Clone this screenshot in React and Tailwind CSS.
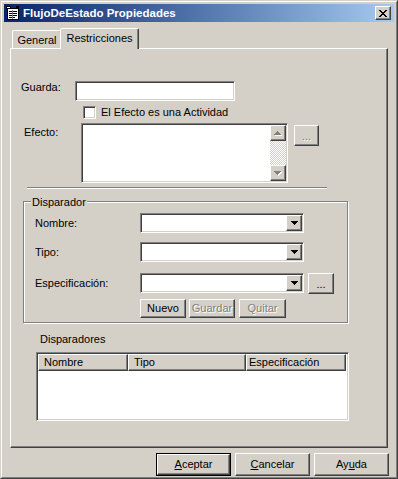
import React from "react";

const raised =
  "border border-t-white border-l-white border-r-[#404040] border-b-[#404040] shadow-[inset_-1px_-1px_0_#808080]";
const sunken =
  "border border-t-[#808080] border-l-[#808080] border-r-white border-b-white shadow-[inset_1px_1px_0_#404040,inset_-1px_-1px_0_#d4d0c8]";
const disabledText = "text-[#808080] [text-shadow:1px_1px_0_#ffffff]";

const ARROW_DOWN = ["#######", ".#####.", "..###..", "...#..."];
const ARROW_UP = ["...#...", "..###..", ".#####.", "#######"];
const CLOSE_X = ["##....##", ".##..##.", "..####..", "...##...", "..####..", ".##..##.", "##....##"];

function Glyph({ rows, color = "#000000", shadow = false }) {
  const h = rows.length;
  const w = rows[0].length;
  const pts = [];
  rows.forEach((r, y) => [...r].forEach((c, x) => c === "#" && pts.push([x, y])));
  return (
    <svg
      width={shadow ? w + 1 : w}
      height={shadow ? h + 1 : h}
      shapeRendering="crispEdges"
      className="block">
      {shadow &&
        pts.map(([x, y]) => <rect key={`s${x}-${y}`} x={x + 1} y={y + 1} width="1" height="1" fill="#ffffff" />)}
      {pts.map(([x, y]) => (
        <rect key={`${x}-${y}`} x={x} y={y} width="1" height="1" fill={color} />
      ))}
    </svg>
  );
}

function TitleIcon() {
  return (
    <svg width="16" height="16" viewBox="0 0 16 16" shapeRendering="crispEdges" className="block shrink-0">
      <rect x="2.5" y="3.5" width="11" height="11" fill="#ffffff" stroke="#000000" />
      <rect x="4" y="6" width="8" height="1" fill="#000000" />
      <rect x="4" y="8" width="8" height="1" fill="#000000" />
      <rect x="4" y="10" width="8" height="1" fill="#000000" />
      <rect x="4" y="12" width="6" height="1" fill="#000000" />
      <rect x="7" y="5" width="1" height="9" fill="#808080" />
      <rect x="1" y="1" width="5" height="3" fill="#000000" />
      <rect x="2" y="2" width="3" height="1" fill="#ffffff" />
      <rect x="11" y="1" width="3" height="3" fill="#000000" />
    </svg>
  );
}

function Button({ children, className = "", disabled = false }) {
  return (
    <div
      className={`${raised} bg-[#d4d0c8] flex items-center justify-center ${
        disabled ? disabledText : "text-black"
      } ${className}`}>
      {children}
    </div>
  );
}

function Combo({ className = "" }) {
  return (
    <div className={`${sunken} bg-white h-[20px] w-[164px] p-px flex justify-end ${className}`}>
      <div className={`${raised} bg-[#d4d0c8] w-[16px] h-[16px] flex items-center justify-center`}>
        <Glyph rows={ARROW_DOWN} />
      </div>
    </div>
  );
}

function HeaderCell({ children, className = "" }) {
  return (
    <div className={`${raised} bg-[#d4d0c8] h-full flex items-center ${className}`}>{children}</div>
  );
}

export default function App() {
  return (
    <div className="w-[398px] h-[479px] bg-[#d4d0c8] border border-t-[#d4d0c8] border-l-[#d4d0c8] border-r-[#404040] border-b-[#404040] font-['Liberation_Sans',Arial,sans-serif] text-[11px] leading-[13px] text-black select-none overflow-hidden">
      <div className="h-full border border-t-white border-l-white border-r-[#808080] border-b-[#808080] pt-[2px] px-[2px] pb-px flex flex-col">
        {/* title bar */}
        <div className="h-[18px] shrink-0 flex items-center bg-gradient-to-r from-[#0a246a] to-[#a6caf0] pl-px pr-[3px]">
          <TitleIcon />
          <span className="ml-[2px] text-white font-bold text-[11.5px] leading-[14px]">FlujoDeEstado Propiedades</span>
          <div className={`${raised} ml-auto w-[16px] h-[14px] bg-[#d4d0c8] flex items-center justify-center`}>
            <Glyph rows={CLOSE_X} />
          </div>
        </div>

        {/* tabs */}
        <div className="mt-[6px] ml-[8px] h-[21px] shrink-0 flex items-end relative z-10">
          <div className="w-[50px] h-[18px] mb-px border-t border-l border-t-white border-l-white border-r border-r-[#404040] shadow-[inset_-1px_0_0_#808080] rounded-t-[2px] flex justify-center pt-[3px]">
            General
          </div>
          <div className="-ml-[2px] w-[79px] h-[21px] bg-[#d4d0c8] border-t border-l border-t-white border-l-white border-r border-r-[#404040] shadow-[inset_-1px_0_0_#808080] rounded-t-[2px] flex justify-center pt-[3px]">
            Restricciones
          </div>
        </div>

        {/* panel */}
        <div className="-mt-px mx-[6px] h-[400px] shrink-0 border-t border-l border-t-white border-l-white border-r border-b border-r-[#404040] border-b-[#404040] shadow-[inset_-1px_-1px_0_#808080] flex flex-col">
          <div className="mt-[32px] ml-[10px] flex items-start">
            <span className="w-[54px]">Guarda:</span>
            <div className={`${sunken} bg-white w-[160px] h-[20px]`} />
          </div>

          <div className="mt-[5px] ml-[72px] flex items-center gap-[5px]">
            <div className={`${sunken} bg-white w-[13px] h-[13px]`} />
            <span className="-mt-px">El Efecto es una Actividad</span>
          </div>

          <div className="mt-[4px] ml-[13px] flex items-start">
            <span className="w-[57px] pt-[3px]">Efecto:</span>
            <div className={`${sunken} bg-white w-[207px] h-[60px] p-px flex justify-end`}>
              <div className="w-[16px] h-full flex flex-col">
                <div className={`${raised} bg-[#d4d0c8] w-[16px] h-[16px] flex items-center justify-center`}>
                  <Glyph rows={ARROW_UP} color="#808080" shadow />
                </div>
                <div className="flex-1 bg-[repeating-conic-gradient(#ffffff_0%_25%,#d4d0c8_0%_50%)] bg-[length:2px_2px]" />
                <div className={`${raised} bg-[#d4d0c8] w-[16px] h-[16px] flex items-center justify-center`}>
                  <Glyph rows={ARROW_DOWN} color="#808080" shadow />
                </div>
              </div>
            </div>
            <Button disabled className="ml-[6px] mt-[2px] w-[25px] h-[21px] pt-[2px]">
              ...
            </Button>
          </div>

          <div className="mt-[4px] ml-[16px] w-[300px] h-[2px] border-t border-b border-t-[#808080] border-b-white" />

          {/* Disparador group */}
          <div className="mt-[12px] ml-[12px] w-[325px] h-[122px] relative border border-[#808080] shadow-[inset_1px_1px_0_#ffffff,1px_1px_0_#ffffff] flex flex-col">
            <span className="absolute left-[7px] -top-[6px] px-px bg-[#d4d0c8]">Disparador</span>

            <div className="mt-[11px] ml-[11px] flex items-start">
              <span className="w-[105px] pt-[4px]">Nombre:</span>
              <Combo />
            </div>
            <div className="mt-[9px] ml-[11px] flex items-start">
              <span className="w-[105px] pt-[4px]">Tipo:</span>
              <Combo />
            </div>
            <div className="mt-[11px] ml-[11px] flex items-start">
              <span className="w-[105px] pt-[4px]">Especificación:</span>
              <Combo />
              <Button className="ml-[4px] w-[26px] h-[21px] pt-[2px]">...</Button>
            </div>
            <div className="mt-[5px] ml-[116px] flex">
              <Button className="w-[46px] h-[19px]">Nuevo</Button>
              <Button disabled className="ml-[3px] w-[46px] h-[19px]">
                Guardar
              </Button>
              <Button disabled className="ml-[4px] w-[47px] h-[19px]">
                Quitar
              </Button>
            </div>
          </div>

          <span className="mt-[10px] ml-[29px]">Disparadores</span>

          <div className={`${sunken} bg-white mt-[6px] ml-[25px] w-[313px] h-[69px] p-px`}>
            <div className="h-[17px] flex">
              <HeaderCell className="w-[90px] pl-[5px]">Nombre</HeaderCell>
              <HeaderCell className="w-[118px] pl-[5px]">Tipo</HeaderCell>
              <HeaderCell className="w-[100px] pl-[2px]">Especificación</HeaderCell>
            </div>
          </div>
        </div>

        {/* dialog buttons */}
        <div className="mt-[5px] pr-[5px] flex justify-end gap-[4px]">
          <div className="w-[75px] h-[23px] border border-black">
            <Button className="w-full h-full">
              <span>
                <span className="underline">A</span>ceptar
              </span>
            </Button>
          </div>
          <Button className="w-[75px] h-[23px]">
            <span>
              <span className="underline">C</span>ancelar
            </span>
          </Button>
          <Button className="w-[75px] h-[23px]">
            <span>
              Ay<span className="underline">u</span>da
            </span>
          </Button>
        </div>
      </div>
    </div>
  );
}
